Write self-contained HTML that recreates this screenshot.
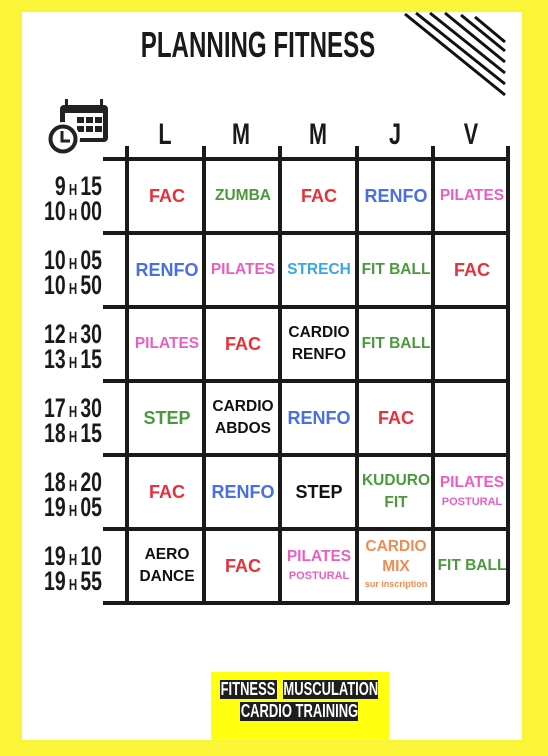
<!DOCTYPE html>
<html><head><meta charset="utf-8"><style>
*{margin:0;padding:0;box-sizing:border-box}
body{width:548px;height:756px;background:#fbf53a;position:relative;overflow:hidden;font-family:"Liberation Sans",sans-serif}
.white{position:absolute;left:22px;top:12px;width:500px;height:728px;background:#fff}
.a{position:absolute}
.title{left:-16px;width:548px;top:24px;text-align:center;font-weight:bold;font-size:36px;color:#1a1a1a;transform:scaleX(.67)}
.h{position:absolute;left:103px;width:406px;height:4px;background:#1a1a1a}
.v{position:absolute;top:146px;width:4px;height:458px;background:#1a1a1a}
.day{position:absolute;top:118px;width:76px;text-align:center;font-weight:bold;font-size:30px;color:#1a1a1a;transform:scaleX(.72)}
.t{position:absolute;left:0;width:102px;text-align:right;font-weight:bold;font-size:27px;line-height:21px;color:#1a1a1a;transform:scaleX(.72);transform-origin:right center;white-space:nowrap}
.t small{font-size:16px}
.c{position:absolute;width:76px;height:70px;display:flex;flex-direction:column;align-items:center;justify-content:center;text-align:center;font-weight:bold;font-size:18px;line-height:23px;white-space:nowrap}
.s{font-size:15.5px;line-height:22px}
.r{color:#e83038}.g{color:#4a9a3c}.b{color:#4a6ee6}.p{color:#ea5ec4}.k{color:#111}.cy{color:#36a8e4}.o{color:#f08c52}
.lab{position:absolute;background:#1e1e1e;color:#fff;font-weight:bold;font-size:18px;line-height:19px;text-align:center;white-space:nowrap;overflow:hidden}
.lab span{display:inline-block;transform:scaleX(.72)}
</style></head><body>
<div class="white"></div>
<svg class="a" style="left:0;top:0" width="548" height="160"><g stroke="#111" stroke-width="3"><line x1="405" y1="14" x2="505" y2="95"/><line x1="416" y1="13" x2="505" y2="84"/><line x1="430" y1="13" x2="505" y2="73"/><line x1="445" y1="13" x2="505" y2="62"/><line x1="461" y1="15" x2="505" y2="51"/><line x1="475" y1="17" x2="505" y2="42"/></g>
<rect x="60" y="105" width="48" height="37" rx="4" fill="#222"/>
<rect x="65" y="113" width="38" height="25" fill="#fff"/>
<rect x="65" y="99" width="3" height="10" fill="#222"/><rect x="100" y="99" width="3" height="10" fill="#222"/>
<g fill="#222"><rect x="77" y="117" width="7" height="6"/><rect x="86" y="117" width="7" height="6"/><rect x="95" y="117" width="7" height="6"/><rect x="77" y="126" width="7" height="6"/><rect x="86" y="126" width="7" height="6"/><rect x="95" y="126" width="7" height="6"/></g>
<circle cx="63" cy="139" r="17" fill="#fff"/>
<circle cx="63" cy="139" r="12.5" fill="#fff" stroke="#222" stroke-width="4"/>
<path d="M62 131v10h8" fill="none" stroke="#222" stroke-width="3"/>
</svg>
<div class="a title">PLANNING FITNESS</div>
<div class="day" style="left:127px">L</div><div class="day" style="left:203px">M</div><div class="day" style="left:280px">M</div><div class="day" style="left:357px">J</div><div class="day" style="left:433px">V</div>
<div class="h" style="top:157px"></div><div class="h" style="top:231px"></div><div class="h" style="top:305px"></div><div class="h" style="top:379px"></div><div class="h" style="top:453px"></div><div class="h" style="top:527px"></div><div class="h" style="top:601px"></div>
<div class="v" style="left:125px"></div><div class="v" style="left:202px"></div><div class="v" style="left:278px"></div><div class="v" style="left:355px"></div><div class="v" style="left:431px"></div><div class="v" style="left:506px"></div>
<div class="t" style="top:176px">9<small> H </small>15<br>10<small> H </small>00</div>
<div class="t" style="top:250px">10<small> H </small>05<br>10<small> H </small>50</div>
<div class="t" style="top:324px">12<small> H </small>30<br>13<small> H </small>15</div>
<div class="t" style="top:398px">17<small> H </small>30<br>18<small> H </small>15</div>
<div class="t" style="top:472px">18<small> H </small>20<br>19<small> H </small>05</div>
<div class="t" style="top:546px">19<small> H </small>10<br>19<small> H </small>55</div>
<div class="c r" style="left:129px;top:161px">FAC</div>
<div class="c g s" style="left:205px;top:161px">ZUMBA</div>
<div class="c r" style="left:281px;top:161px">FAC</div>
<div class="c b" style="left:358px;top:161px">RENFO</div>
<div class="c p s" style="left:434px;top:161px">PILATES</div>
<div class="c b" style="left:129px;top:235px">RENFO</div>
<div class="c p s" style="left:205px;top:235px">PILATES</div>
<div class="c cy s" style="left:281px;top:235px">STRECH</div>
<div class="c g s" style="left:358px;top:235px">FIT BALL</div>
<div class="c r" style="left:434px;top:235px">FAC</div>
<div class="c p s" style="left:129px;top:309px">PILATES</div>
<div class="c r" style="left:205px;top:309px">FAC</div>
<div class="c k s" style="left:281px;top:309px">CARDIO<br>RENFO</div>
<div class="c g s" style="left:358px;top:309px">FIT BALL</div>
<div class="c g" style="left:129px;top:383px">STEP</div>
<div class="c k s" style="left:205px;top:383px">CARDIO<br>ABDOS</div>
<div class="c b" style="left:281px;top:383px">RENFO</div>
<div class="c r" style="left:358px;top:383px">FAC</div>
<div class="c r" style="left:129px;top:457px">FAC</div>
<div class="c b" style="left:205px;top:457px">RENFO</div>
<div class="c k" style="left:281px;top:457px">STEP</div>
<div class="c g s" style="left:358px;top:457px">KUDURO<br>FIT</div>
<div class="c p s" style="left:434px;top:457px;line-height:20px">PILATES<span style="font-size:11px;line-height:18px">POSTURAL</span></div>
<div class="c k s" style="left:129px;top:531px">AERO<br>DANCE</div>
<div class="c r" style="left:205px;top:531px">FAC</div>
<div class="c p s" style="left:281px;top:531px;line-height:20px">PILATES<span style="font-size:11px;line-height:18px">POSTURAL</span></div>
<div class="c o s" style="left:358px;top:529px;line-height:20px">CARDIO<br>MIX<span style="font-size:9px;line-height:14px">sur inscription</span></div>
<div class="c g s" style="left:434px;top:531px">FIT BALL</div>
<div class="a" style="left:211px;top:672px;width:178px;height:67px;background:#ffff10"></div>
<div class="lab" style="left:220px;top:680px;width:57px"><span style="margin-left:-20px;margin-right:-20px">FITNESS</span></div>
<div class="lab" style="left:283px;top:680px;width:95px"><span style="margin-left:-30px;margin-right:-30px">MUSCULATION</span></div>
<div class="lab" style="left:240px;top:702px;width:118px"><span style="margin-left:-30px;margin-right:-30px">CARDIO TRAINING</span></div>
</body></html>
